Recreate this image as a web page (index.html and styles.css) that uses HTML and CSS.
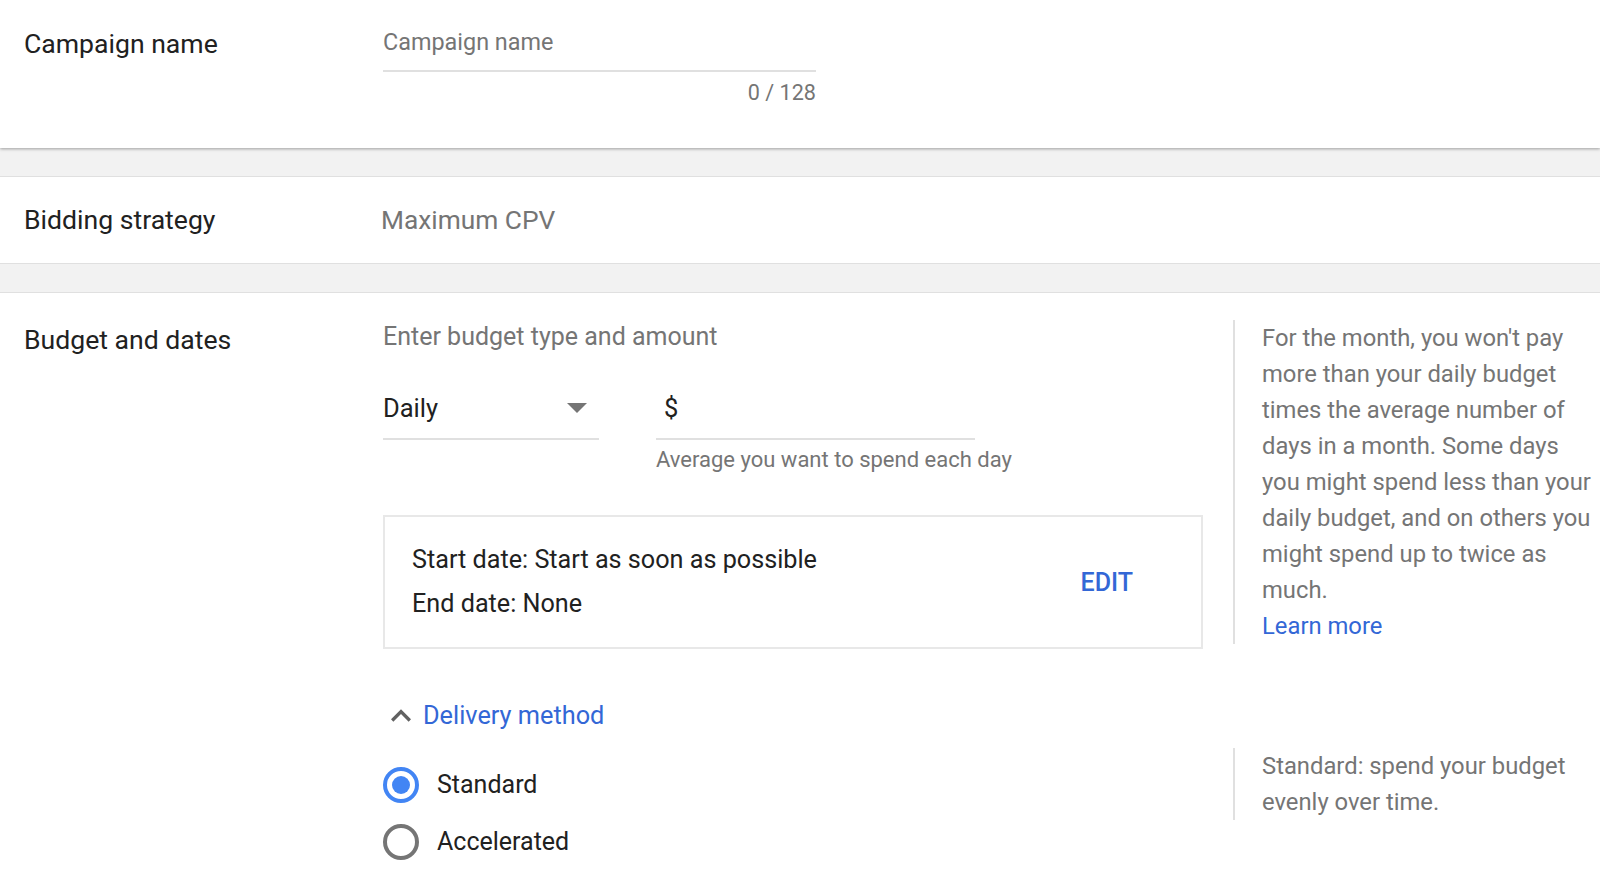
FILE: index.html
```html
<!DOCTYPE html>
<html lang="en">
<head>
  <meta charset="UTF-8">
  <meta name="viewport" content="width=device-width, initial-scale=1.0">
  <title>Campaign settings</title>
  <link rel="stylesheet" href="styles.css">
</head>
<body>
  <!-- Nome da campanha -->
  <section class="panel panel-name">
    <div class="label">Campaign name</div>
    <div class="name-field">
      <input type="text" class="text-input" placeholder="Campaign name">
      <div class="counter">0 / 128</div>
    </div>
  </section>

  <!-- Estratégia de lances -->
  <section class="panel panel-bidding">
    <div class="label">Bidding strategy</div>
    <div class="value">Maximum CPV</div>
  </section>

  <!-- Orçamento e datas -->
  <section class="panel panel-budget">
    <div class="label">Budget and dates</div>
    <div class="budget-main">
      <div class="subtitle">Enter budget type and amount</div>
      <div class="budget-fields">
        <div class="select">
          <span>Daily</span>
          <span class="select-arrow"></span>
        </div>
        <div class="amount-wrap">
          <div class="amount"><span>$</span></div>
          <div class="hint">Average you want to spend each day</div>
        </div>
      </div>
      <div class="dates-box">
        <div class="dates-text">
          <div>Start date: Start as soon as possible</div>
          <div>End date: None</div>
        </div>
        <a href="#" class="edit-btn">EDIT</a>
      </div>
      <a href="#" class="toggle">
        <svg viewBox="0 0 24 24"><path d="M12 8l-6 6 1.41 1.41L12 10.83l4.59 4.58L18 14z"/></svg>
        <span>Delivery method</span>
      </a>
    </div>
    <aside class="help">
      For the month, you won't pay more than your daily budget times the average number of days in a month. Some days you might spend less than your daily budget, and on others you might spend up to twice as much.
      <a href="#" class="learn-more">Learn more</a>
    </aside>

    <div class="radio-group">
      <label class="radio checked"><span class="radio-circle"></span>Standard</label>
      <label class="radio"><span class="radio-circle"></span>Accelerated</label>
    </div>
    <aside class="help help-delivery">
      Standard: spend your budget evenly over time.
    </aside>
  </section>
</body>
</html>
```

FILE: styles.css
```css
:root {
  --texto: #212121;
  --cinza-texto: #757575;
  --borda: #e0e0e0;
  --fundo: #f2f2f2;
  --azul: #3367d6;
  --azul-radio: #4285f4;
}
* { box-sizing: border-box; margin: 0; padding: 0; }
body {
  font-family: Roboto, 'Noto Sans', Arial, sans-serif;
  background: var(--fundo);
  color: var(--texto);
  min-height: 100vh;
}
a { text-decoration: none; }

.panel {
  background: #fff;
  display: grid;
  grid-template-columns: 359px 820px 1fr;
  padding-left: 24px;
}
.label {
  font-size: 26.6px;
  line-height: 36px;
}

/* Campaign name */
.panel-name {
  height: 148px;
  padding-top: 26px;
  box-shadow: 0 1px 3px rgba(0, 0, 0, 0.35);
}
.name-field {
  width: 433px;
  margin-top: -2px;
}
.text-input {
  display: block;
  width: 100%;
  height: 48px;
  padding: 0 0 10px 0;
  border: none;
  border-bottom: 2px solid var(--borda);
  font-family: inherit;
  font-size: 23.4px;
  line-height: 36px;
  color: var(--texto);
  outline: none;
  background: transparent;
}
.text-input::placeholder { color: var(--cinza-texto); }
.counter {
  margin-top: 6px;
  text-align: right;
  font-size: 21.6px;
  line-height: 30px;
  color: var(--cinza-texto);
}

/* Bidding strategy */
.panel-bidding {
  margin-top: 28px;
  height: 88px;
  border-top: 1px solid var(--borda);
  border-bottom: 1px solid var(--borda);
  align-items: center;
}
.panel-bidding .value {
  font-size: 26.3px;
  color: var(--cinza-texto);
  margin-left: -2px;
}

/* Budget and dates */
.panel-budget {
  margin-top: 28px;
  border-top: 1px solid var(--borda);
  padding-top: 29px;
  padding-bottom: 20px;
  row-gap: 14px;
  align-items: start;
}
.subtitle {
  font-size: 25px;
  line-height: 30px;
  color: var(--cinza-texto);
}
.budget-fields {
  display: flex;
  align-items: flex-start;
  gap: 57px;
  margin-top: 38px;
}
.select {
  width: 216px;
  display: flex;
  align-items: center;
  justify-content: space-between;
  padding-bottom: 12px;
  border-bottom: 2px solid var(--borda);
  font-size: 25.5px;
  line-height: 36px;
}
.select-arrow {
  width: 0; height: 0;
  border-left: 10px solid transparent;
  border-right: 10px solid transparent;
  border-top: 10px solid var(--cinza-texto);
  margin-right: 12px;
}
.amount-wrap { width: 319px; }
.amount {
  padding: 0 0 12px 8px;
  border-bottom: 2px solid var(--borda);
  font-size: 25.5px;
  line-height: 36px;
}
.hint {
  margin-top: 6px;
  font-size: 22px;
  line-height: 28px;
  color: var(--cinza-texto);
  white-space: nowrap;
}
.dates-box {
  margin-top: 41px;
  height: 134px;
  border: 2px solid #e8e8e8;
  display: flex;
  align-items: center;
  justify-content: space-between;
  padding: 0 68px 0 27px;
}
.dates-text {
  font-size: 25.2px;
  line-height: 44px;
}
.edit-btn {
  color: var(--azul);
  font-size: 25px;
  font-weight: 500;
}
.toggle {
  display: flex;
  align-items: center;
  gap: 2px;
  margin-top: 47px;
  margin-left: -2px;
  color: var(--azul);
  font-size: 25.3px;
  line-height: 36px;
}
.toggle svg {
  width: 40px; height: 40px;
  fill: #616161;
}

/* Help column */
.help {
  grid-column: 3;
  margin-left: 30px;
  margin-top: -2px;
  border-left: 2px solid var(--borda);
  padding: 0 2px 0 27px;
  font-size: 23.8px;
  line-height: 36px;
  color: var(--cinza-texto);
}
.learn-more {
  display: block;
  color: var(--azul);
}

/* Radios */
.radio-group {
  grid-column: 2;
  padding-top: 6px;
}
.radio {
  display: flex;
  align-items: center;
  gap: 18px;
  height: 57px;
  font-size: 25px;
  cursor: pointer;
}
.radio-circle {
  width: 36px; height: 36px;
  border-radius: 50%;
  border: 4px solid var(--cinza-texto);
  display: flex;
  align-items: center;
  justify-content: center;
}
.radio.checked .radio-circle { border-color: var(--azul-radio); }
.radio.checked .radio-circle::after {
  content: '';
  width: 18px; height: 18px;
  border-radius: 50%;
  background: var(--azul-radio);
}
```
